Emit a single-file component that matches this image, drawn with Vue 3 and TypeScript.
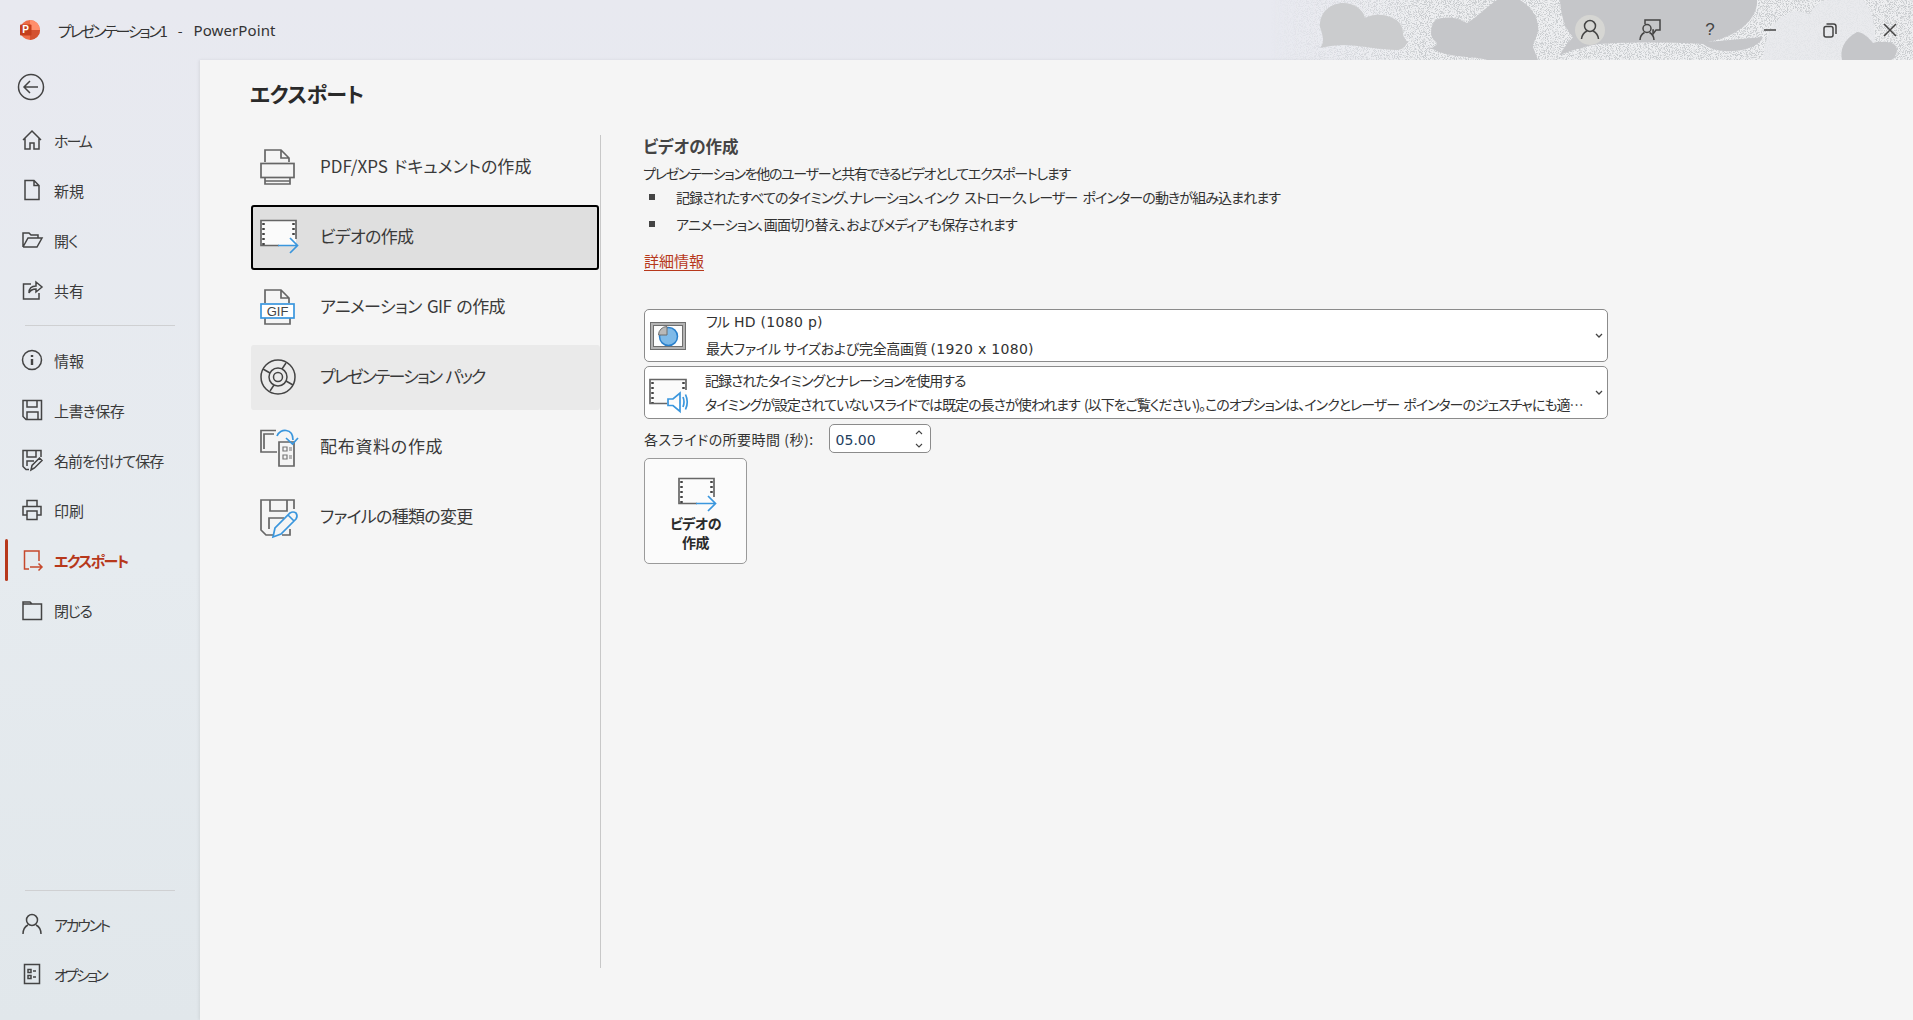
<script setup lang="ts">
interface Item { label: string; ls: number }
const navTop: Item[] = [
  { label: 'ホーム', ls: -2 },
  { label: '新規', ls: 0 },
  { label: '開く', ls: -0.8 },
  { label: '共有', ls: 0 },
]
const navMid: Item[] = [
  { label: '情報', ls: 0 },
  { label: '上書き保存', ls: -0.6 },
  { label: '名前を付けて保存', ls: -1 },
  { label: '印刷', ls: 0 },
  { label: 'エクスポート', ls: -1.6 },
  { label: '閉じる', ls: -1.3 },
]
const navBottom: Item[] = [
  { label: 'アカウント', ls: -2.3 },
  { label: 'オプション', ls: -2.8 },
]
const options: Item[] = [
  { label: 'PDF/XPS ドキュメントの作成', ls: 0.05 },
  { label: 'ビデオの作成', ls: -0.7 },
  { label: 'アニメーション GIF の作成', ls: -0.6 },
  { label: 'プレゼンテーション パック', ls: -1.8 },
  { label: '配布資料の作成', ls: 0.7 },
  { label: 'ファイルの種類の変更', ls: -0.7 },
]
const lsStyle = (ls: number) => ({ letterSpacing: `${ls}px` })
</script>

<template>
  <div class="app">
    <header class="titlebar">
      <svg class="clouds" width="700" height="60" viewBox="0 0 700 60">
        <defs>
          <linearGradient id="fade" x1="0" x2="1" y1="0" y2="0">
            <stop offset="0.08" stop-color="#fff" stop-opacity="0" />
            <stop offset="0.3" stop-color="#fff" stop-opacity="1" />
            <stop offset="1" stop-color="#fff" stop-opacity="1" />
          </linearGradient>
          <filter id="noise" x="0" y="0" width="100%" height="100%" color-interpolation-filters="sRGB">
            <feTurbulence type="fractalNoise" baseFrequency="1.1" numOctaves="2" seed="4" />
            <feColorMatrix type="matrix" values="0 0 0 0 0.79  0 0 0 0 0.80  0 0 0 0 0.81  -6 0 0 0 3.2" />
          </filter>
          <mask id="fademask"><rect width="700" height="60" fill="url(#fade)" /></mask>
        </defs>
        <g mask="url(#fademask)">
          <rect width="700" height="60" fill="#eeeff1" />
          <rect width="700" height="60" filter="url(#noise)" />
        </g>
        <path d="M550 60 C552 34 560 20 572 16 C580 8 590 12 597 14 C600 6 610 0 615 0 L650 0 C660 10 665 30 660 60 Z" fill="#e8e9ec" opacity="0.85" />
        <path fill="#cbccce" d="M107 48 C112 42 110 36 107 27 C106 12 118 3 130 3 C142 3 150 10 152 18 C160 14 170 14 177 17 C186 20 190 26 190 33 C190 36 192 40 195 42 C192 46 190 50 184 50 C170 50 150 46 134 45 C124 45 115 46 107 48 Z" />
        <g fill="#c5c6c9">
          <path d="M218 33 C218 24 222 18 230 18 C240 16 248 20 254 23 C266 16 274 6 284 0 L307 0 C320 8 326 20 325 30 C324 38 320 42 320 47 L325 60 L274 60 C262 56 235 58 220 49 L214 49 C220 48 224 46 224 43 C220 40 218 36 218 33 Z" />
          <path d="M347 0 L544 0 C545 10 538 22 526 30 C515 37 505 40 495 42 L550 37 C548 44 536 50 520 51 C505 52 495 48 490 44 C450 42 400 42 380 45 C365 48 355 52 347 55 C350 48 356 42 360 37 C353 30 348 18 347 0 Z" />
          <path d="M629 60 C627 50 630 40 644 32 C650 32 656 38 660 43 C665 41 668 42 672 42 C678 42 684 44 684 50 C684 54 680 60 678 60 Z" />
        </g>
      </svg>
      <div class="tb-left">
        <svg class="logo" width="20" height="20" viewBox="0 0 20 20">
          <circle cx="10" cy="10" r="10" fill="#ed6c47" />
          <path d="M10 0 A10 10 0 0 1 20 10 H10 Z" fill="#ff8f6b" />
          <path d="M10 10 H20 A10 10 0 0 1 10 20 Z" fill="#d35230" />
          <rect x="0" y="4.500" width="11.500" height="11" rx="1" fill="#c43e1c" />
          <text x="5.700" y="13.400" text-anchor="middle" class="logo-p">P</text>
        </svg>
        <span class="doc-name">プレゼンテーション1</span>
        <span class="doc-sep">-</span>
        <span class="doc-app">PowerPoint</span>
      </div>
      <div class="tb-right">
        <span class="tb-cell">
          <span class="tb-avatar">
            <svg width="20" height="22" viewBox="0 0 20 22" class="st"><circle cx="10" cy="7" r="5.500" /><path d="M1.500 20 C2 15 5 13 7 12 M18.500 20 C18 15 15 13 13 12" /></svg>
          </span>
        </span>
        <span class="tb-cell">
          <svg class="st" width="22" height="22" viewBox="0 0 22 22"><path d="M6 5 V1 H21 V11 H17 L14 15 V11 H15" /><circle cx="8" cy="9.500" r="4" /><path d="M1 21 C1 17 3 15 5.500 13.500 M15 21 C15 17 13 15 10.500 13.500" /></svg>
        </span>
        <span class="tb-cell tb-help">?</span>
        <span class="tb-cell"><svg class="st" width="12" height="2" viewBox="0 0 12 2"><path d="M0 1 H12" /></svg></span>
        <span class="tb-cell"><svg class="st" width="14" height="15" viewBox="0 0 14 15"><rect x="1" y="3.500" width="9" height="10.500" rx="2" /><path d="M3.500 1 H10.500 Q13 1 13 3.500 V11" /></svg></span>
        <span class="tb-cell"><svg class="st" width="14" height="14" viewBox="0 0 14 14"><path d="M1 1 L13 13 M13 1 L1 13" /></svg></span>
      </div>
    </header>

    <div class="body">
      <aside class="sidebar">
        <button class="back" aria-label="戻る">
          <svg width="28" height="28" viewBox="0 0 28 28" class="st"><circle cx="14" cy="14" r="12.500" /><path d="M21 14 H7 M13 8 L7 14 L13 20" /></svg>
        </button>
        <nav class="nav nav-first">
          <div v-for="(n, i) in navTop" :key="n.label" class="nav-row">
            <svg width="22" height="22" viewBox="0 0 22 22" class="st nav-ic">
              <template v-if="i === 0"><path d="M2 11 L11 2 L20 11 M4 9.500 V20 H9 V14 H13 V20 H18 V9.500" /></template>
              <template v-if="i === 1"><path d="M4 1.500 H13 L18 6.500 V20.500 H4 Z M13 1.500 V6.500 H18" /></template>
              <template v-if="i === 2"><path d="M2 18 V4 H8 L10 6 H17 V9 M2 18 H16 L21 9 H7 L2 18" /></template>
              <template v-if="i === 3"><path d="M10 5 H2.500 V20 H18 V14 M8 14 C8 9 11 7 15 7 V3 L21 8 L15 13 V10 C12 10 9.500 11 8 14 Z" /></template>
            </svg>
            <span :style="lsStyle(n.ls)">{{ n.label }}</span>
          </div>
        </nav>
        <div class="divider first"></div>
        <nav class="nav">
          <div v-for="(n, i) in navMid" :key="n.label" class="nav-row" :class="{ active: i === 4 }">
            <svg width="22" height="22" viewBox="0 0 22 22" class="st nav-ic">
              <template v-if="i === 0"><circle cx="11" cy="11" r="9.500" /><path d="M11 10 V16" stroke-width="2.400" /><path d="M11 6 V8" stroke-width="2.400" /></template>
              <template v-if="i === 1"><path d="M2 1.500 H20.500 V20.500 H5 L2 17.500 Z M6 1.500 V8 H16 V1.500 M6 20.500 V13 H17 V20.500" /></template>
              <template v-if="i === 2"><path d="M8 20.500 H5 L2 17.500 V1.500 H20 V8 M6 1.500 V8 H15 V1.500 M6 17 V12 H13 M10 21 L11 16.500 L18.500 9 L21 11.500 L13.500 19 Z" /></template>
              <template v-if="i === 3"><path d="M6 7 V1.500 H16 V7 M6 16 H2 V7.500 H20 V16 H16 M6 12 H16 V20.500 H6 Z" /></template>
              <template v-if="i === 4"><path d="M18 12 V2 H3.500 V20 H8 M9 18 H21 M17.500 14.500 L21 18 L17.500 21.500" class="red" /></template>
              <template v-if="i === 5"><path d="M2 3 H9 L11 5 H20.500 V20.500 H2 Z M2 5 H11" /></template>
            </svg>
            <span :style="lsStyle(n.ls)">{{ n.label }}</span>
          </div>
        </nav>
        <div class="spacer"></div>
        <div class="divider last"></div>
        <nav class="nav bottom">
          <div v-for="(n, i) in navBottom" :key="n.label" class="nav-row">
            <svg width="22" height="22" viewBox="0 0 22 22" class="st nav-ic">
              <template v-if="i === 0"><circle cx="11" cy="7" r="5.500" /><path d="M2 21 C2 15 5 13 7 12 M20 21 C20 15 17 13 15 12" /></template>
              <template v-if="i === 1"><path d="M3.500 1.500 H18.500 V20.500 H3.500 Z" /><path d="M7 6.500 H10 V9.500 H7 Z M7 12.500 H10 V15.500 H7 Z M12 8 H15 M12 14 H15" /></template>
            </svg>
            <span :style="lsStyle(n.ls)">{{ n.label }}</span>
          </div>
        </nav>
      </aside>

      <main class="content">
        <h1 class="page-title">エクスポート</h1>
        <div class="columns">
          <ul class="options">
            <li v-for="(o, i) in options" :key="o.label" class="option" :class="{ selected: i === 1, hover: i === 3 }">
              <svg width="38" height="38" viewBox="0 0 38 38" class="opt-ic">
                <template v-if="i === 0">
                  <path d="M5 13 V1 H21 L29 9 V13 M21 1 V9 H29" class="g" /><rect x="1" y="14.500" width="33" height="14" class="g" /><path d="M5 28.500 V35 H30 V28.500 M5 32 H30" class="g" />
                </template>
                <template v-if="i === 1">
                  <rect x="1" y="1.500" width="35" height="25" fill="#fbfbfb" /><path d="M19 26.500 H1 V1.500 H36 V20" class="g" /><path d="M3.500 4 V26 M33.500 4 V18" class="dots" /><path d="M18 26.500 H37.500 M30 19 L37.500 26.500 L30 34" class="b" />
                </template>
                <template v-if="i === 2">
                  <path d="M5 14 V1 H21 L29 9 V14 M21 1 V9 H29" class="g" /><path d="M5 29 V35 H30 V29" class="g" /><rect x="1" y="15" width="33" height="14" class="b" /><text x="17.500" y="26.500" text-anchor="middle" class="gif">GIF</text>
                </template>
                <template v-if="i === 3">
                  <circle cx="18" cy="18" r="17" class="dk" /><circle cx="18" cy="18" r="9" class="dk" /><circle cx="18" cy="18" r="4.500" class="dk" /><path d="M10 14 L3 10 M26 22 L33 26 M22 10 L26 4 M14 26 L10 32" class="dk" />
                </template>
                <template v-if="i === 4">
                  <path d="M17 23 H1 V1.500 H16 M4 20 V5 H14" class="g" /><path d="M19 13 H34 V37 H19 Z" class="g" /><path d="M23 18 H27 V22 H23 Z M23 26 H27 V30 H23 Z M29 19 H32 M29 21 H32 M29 27 H32 M29 29 H32" class="g2" /><path d="M17 7 C20 -1 33 -1 33 11 M26 9 L32.500 15 L38 9" class="b" />
                </template>
                <template v-if="i === 5">
                  <path d="M14 36 H6 L1 31 V1 H34 V10 M10 1 V12 H27 V1 M9 30 V19 H24" class="g" /><path d="M30 30 V36 H22" class="g" /><path d="M13 38 L15 29 L30 14 Q33 12 36 14 Q38 17 36 20 L21 35 Z M28 16 L34 22" class="b" />
                </template>
              </svg>
              <span class="opt-label" :style="lsStyle(o.ls)">{{ o.label }}</span>
            </li>
          </ul>
          <section class="detail">
            <h2 class="detail-title">ビデオの作成</h2>
            <p class="intro">プレゼンテーションを他のユーザーと共有できるビデオとしてエクスポートします</p>
            <ul class="bullets">
              <li class="b1">記録されたすべてのタイミング、ナレーション、インク ストローク、レーザー ポインターの動きが組み込まれます</li>
              <li class="b2">アニメーション、画面切り替え、およびメディアも保存されます</li>
            </ul>
            <a class="more">詳細情報</a>

            <div class="dropdown first-dd">
              <svg width="36" height="28" viewBox="0 0 36 28" class="dd-ic">
                <rect x="0.500" y="0.500" width="35" height="27" fill="#b4b4b4" stroke="#6f6f6f" /><rect x="3.500" y="3.500" width="29" height="21" fill="#fdfdfd" stroke="#6f6f6f" />
                <circle cx="18.500" cy="14.500" r="9" fill="#7fbae8" stroke="#2a80cc" stroke-width="1.500" /><path d="M17 4.500 A8.500 8.500 0 0 0 8.500 13 H17 Z" fill="#b9b9b9" stroke="#6f6f6f" />
              </svg>
              <div class="dd-text"><div class="l1"><span>フル</span> <span class="lat">HD (1080 p)</span></div><div class="l2"><span>最大ファイル サイズおよび完全高画質</span> <span class="lat">(1920 x 1080)</span></div></div>
              <svg class="chev st" width="8" height="5" viewBox="0 0 8 5"><path d="M1 1 L4 4 L7 1" /></svg>
            </div>
            <div class="dropdown second-dd">
              <svg width="38" height="34" viewBox="0 0 38 34" class="dd-ic">
                <rect x="1" y="1.500" width="36" height="24" fill="#fbfbfb" /><path d="M18 25.500 H1 V1.500 H37 V12" class="g" /><path d="M3.500 4 V25 M34.500 4 V11" class="dots" />
                <path d="M19 21 H24 L31 15 V33.500 L24 27.500 H19 Z" class="b" /><path d="M34 19 Q36 24 34 29 M36.500 16.500 Q40 24 36.500 31.500" class="b" />
              </svg>
              <div class="dd-text"><div class="l3">記録されたタイミングとナレーションを使用する</div><div class="ell">タイミングが設定されていないスライドでは既定の長さが使われます (以下をご覧ください)。このオプションは、インクとレーザー ポインターのジェスチャにも適用されます</div></div>
              <svg class="chev st" width="8" height="5" viewBox="0 0 8 5"><path d="M1 1 L4 4 L7 1" /></svg>
            </div>
            <div class="duration">
              <label>各スライドの所要時間 (秒):</label>
              <div class="spin">
                <span class="spin-val">05.00</span>
                <span class="spin-arrows">
                  <svg class="st" width="8" height="5" viewBox="0 0 8 5"><path d="M1 4 L4 1 L7 4" /></svg>
                  <svg class="st" width="8" height="5" viewBox="0 0 8 5"><path d="M1 1 L4 4 L7 1" /></svg>
                </span>
              </div>
            </div>
            <button class="create">
              <svg width="38" height="36" viewBox="0 0 38 36">
                <rect x="1" y="1.500" width="35" height="25" fill="#fbfbfb" /><path d="M19 26.500 H1 V1.500 H36 V20" class="g" /><path d="M3.500 4 V26 M33.500 4 V18" class="dots" /><path d="M18 26.500 H37.500 M30 19 L37.500 26.500 L30 34" class="b" />
              </svg>
              <span>ビデオの<br />作成</span>
            </button>
          </section>
        </div>
      </main>
    </div>
  </div>
</template>

<style>
html, body { margin: 0; overflow: hidden; }
</style>

<style scoped>
.app {
  width: 1913px; height: 1020px; display: flex; flex-direction: column; overflow: hidden;
  background: linear-gradient(180deg, #e8e9f0 0%, #e6ebef 55%, #e1e7eb 100%);
  font-family: "Noto Sans CJK JP", "Noto Sans", sans-serif;
  font-feature-settings: "palt";
  color: #323232;
  font-size: 14px;
}
.st { fill: none; stroke: #444; stroke-width: 1.500; }
.titlebar { height: 60px; flex: none; display: flex; justify-content: space-between; align-items: center; position: relative; }
.clouds { position: absolute; right: 0; top: 0; }
.tb-left { display: flex; align-items: center; margin-left: 20px; position: relative; }
.logo { margin-right: 18px; }
.logo-p { font: 700 10px "Liberation Sans", sans-serif; fill: #fff; }
.doc-name { font-size: 15px; letter-spacing: -2.200px; color: #333; }
.doc-sep { margin: 0 11px 0 12px; font-size: 14px; color: #333; }
.doc-app { font: 15px "Noto Sans", sans-serif; letter-spacing: 0.100px; color: #333; }
.tb-right { position: relative; display: flex; margin-right: -7px; }
.tb-cell { width: 60px; height: 60px; display: flex; align-items: center; justify-content: center; color: #444; }
.tb-avatar { width: 30px; height: 30px; border-radius: 50%; background: #d6d6d3; display: flex; align-items: center; justify-content: center; }
.tb-help { font: 17px "Liberation Sans", sans-serif; }
.body { flex: 1; display: flex; min-height: 0; }
.sidebar { width: 200px; flex: none; display: flex; flex-direction: column; }
.back { width: 28px; height: 28px; margin: 13px 0 0 17px; padding: 0; border: 0; background: none; display: block; }
.nav { display: flex; flex-direction: column; }
.nav-first { margin-top: 14px; }
.nav-row { height: 50px; display: flex; align-items: center; padding-left: 21px; font-size: 15px; color: #3a3a3a; position: relative; }
.nav-ic { width: 22px; height: 22px; margin-right: 11px; flex: none; overflow: visible; }
.nav-row.active { color: #b7381b; font-weight: 700; }
.nav-row.active::before { content: ""; position: absolute; left: 5px; top: 4px; width: 3px; height: 42px; border-radius: 2px; background: #b7381b; }
.red { stroke: #c6492d; }
.divider { height: 1px; background: #cfd0d2; margin: 10px 25px 10px; }
.divider.first { margin-top: 10px; margin-bottom: 9px; }
.divider.last { margin-bottom: 8px; }
.spacer { flex: 1; }
.nav.bottom { margin-bottom: 21px; }
.content { flex: 1; background: #f5f5f5; box-shadow: -1px 0 3px rgba(0, 0, 0, 0.08); padding-left: 50px; display: flex; flex-direction: column; min-width: 0; }
.page-title { font-size: 21px; letter-spacing: -0.500px; font-weight: 700; margin: 15px 0 0; height: 36px; line-height: 36px; color: #2a2a2a; }
.columns { display: flex; margin-top: 24px; height: 833px; }
.options { list-style: none; margin: 0; padding: 0 0 0 1px; width: 349px; border-right: 1px solid #c8c8c8; display: flex; flex-direction: column; gap: 5px; flex: none; }
.option { height: 65px; display: flex; align-items: center; padding-left: 7px; font-size: 17px; word-spacing: 2px; color: #3a3a3a; border-radius: 3px; box-sizing: border-box; border: 2px solid transparent; }
.opt-ic { margin-right: 22px; flex: none; overflow: visible; }
.opt-label { margin-bottom: 5px; }
.option.selected { background: #dfdfdf; border-color: #000; width: 348px; }
.option.hover { background: #eaeaea; }
.g { fill: none; stroke: #666; stroke-width: 1.700; }
.g2 { fill: none; stroke: #777; stroke-width: 1.200; }
.dk { fill: none; stroke: #444; stroke-width: 1.500; }
.b { fill: none; stroke: #3a96dd; stroke-width: 1.700; }
.dots { fill: none; stroke: #444; stroke-width: 2.500; stroke-dasharray: 2 3; }
.gif { font: 13px "Liberation Sans", sans-serif; fill: #444; }
rect.b { fill: #fff; }
.detail { padding-left: 42px; flex: 1; min-width: 0; }
.detail-title { font-size: 16.500px; font-weight: 700; margin: -1px 0 0; height: 24px; line-height: 24px; color: #444; }
.intro { margin: 5px 0 0; height: 21px; line-height: 21px; font-size: 14px; letter-spacing: -1.300px; }
.bullets { list-style: none; margin: 1px 0 0; padding: 0; }
.bullets li { height: 27px; line-height: 24px; font-size: 14px; padding-left: 33px; position: relative; word-spacing: 3px; }
.b1 { letter-spacing: -0.900px; }
.b2 { letter-spacing: -0.700px; }
.bullets li::before { content: ""; position: absolute; left: 6px; top: 9px; width: 6px; height: 6px; background: #444; }
.more { display: block; width: fit-content; margin: 12px 0 0 1px; color: #b7381b; font-size: 15px; line-height: 20px; text-decoration: underline; text-underline-offset: 3px; }
.dropdown { margin-left: 1px; width: 964px; box-sizing: border-box; border: 1px solid #8b8b8b; border-radius: 5px; background: #fff; display: flex; align-items: center; position: relative; }
.first-dd { margin-top: 38px; height: 53px; }
.second-dd { margin-top: 4px; height: 53px; }
.dd-ic { margin-left: 5px; margin-right: 20px; flex: none; overflow: visible; }
.second-dd .dd-ic { margin-left: 4px; margin-right: 18px; margin-top: 5px; }
.dd-text { flex: 1; min-width: 0; font-size: 14px; line-height: 25.500px; margin-right: 13px; }
.lat { font: 14px/25.500px "DejaVu Sans", sans-serif; letter-spacing: 0.300px; }
.l1 span:first-child { letter-spacing: -1px; margin-right: 2px; }
.l1 .lat { letter-spacing: 0.300px; }
.l2 span:first-child { letter-spacing: -0.300px; }
.l3 { letter-spacing: -1px; }
.ell { white-space: nowrap; overflow: hidden; text-overflow: ellipsis; letter-spacing: -1px; word-spacing: 2px; margin-top: -1px; }
.chev { position: absolute; right: 4px; top: 23px; stroke-width: 1.300; }
.duration { display: flex; align-items: center; margin: 5px 0 0 1px; height: 29px; font-size: 14px; letter-spacing: 0.500px; }
.spin { margin-left: 15px; width: 102px; height: 29px; box-sizing: border-box; border: 1px solid #8b8b8b; border-radius: 5px; background: #fff; display: flex; align-items: center; justify-content: space-between; padding: 0 7px 0 6px; }
.spin-val { color: #23405e; font: 14px "DejaVu Sans", sans-serif; letter-spacing: 0; margin-top: 2px; }
.spin-arrows { display: flex; flex-direction: column; gap: 8px; }
.spin-arrows svg { display: block; stroke-width: 1.100; }
.create { margin: 5px 0 0 1px; width: 103px; height: 106px; box-sizing: border-box; border: 1px solid #9a9a9a; border-radius: 5px; background: #fbfbfb; padding: 18px 0 0; display: flex; flex-direction: column; align-items: center; font: 700 14px/19px "Noto Sans CJK JP", sans-serif; font-feature-settings: "palt"; letter-spacing: -0.500px; color: #2a2a2a; }
.create svg { overflow: visible; margin-bottom: 1px; margin-left: 2px; }
</style>
